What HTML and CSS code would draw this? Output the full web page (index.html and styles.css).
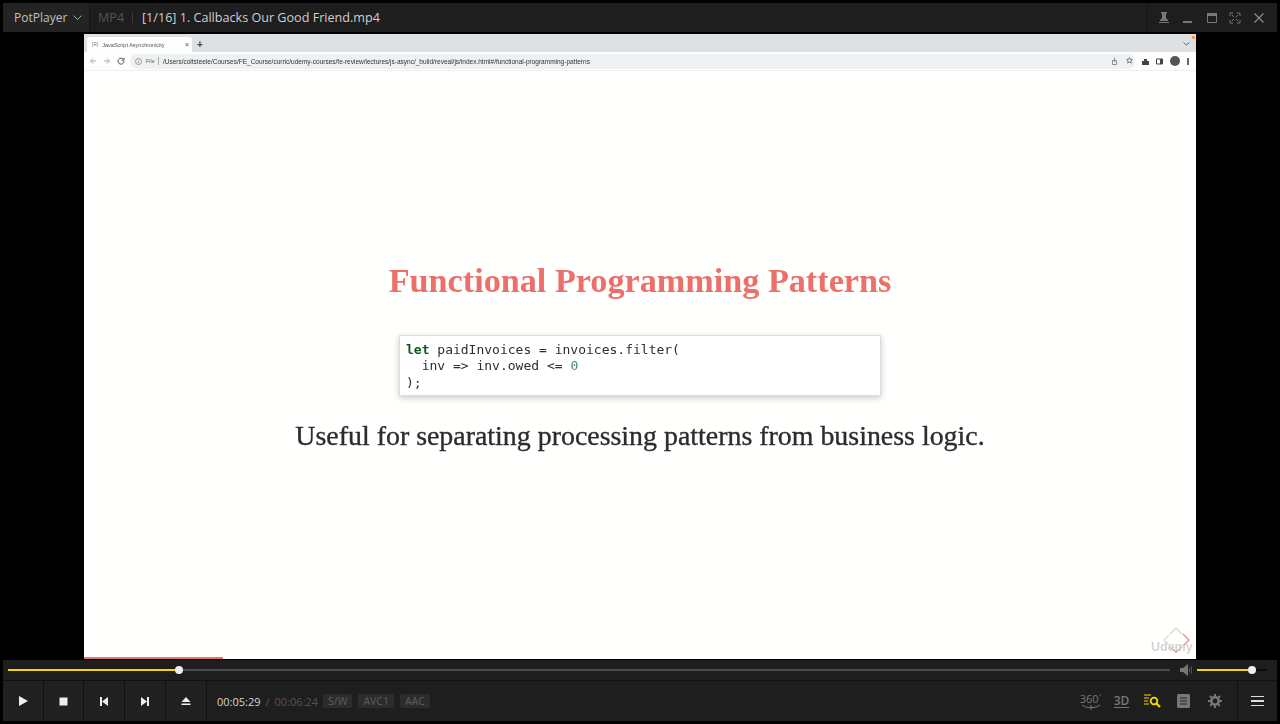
FILE: index.html
```html
<!DOCTYPE html>
<html lang="en">
<head>
    <meta charset="UTF-8">
    <meta name="viewport" content="width=device-width, initial-scale=1.0">
    <title>PotPlayer</title>
    <link rel="stylesheet" href="styles.css">
</head>
<body>

    <div class="player">
        <!-- title bar -->
        <div class="titlebar">
            <div class="brand">PotPlayer
                <svg class="chev" width="9" height="5" viewBox="0 0 9 5"><path d="M.5.5l4 4 4-4" fill="none" stroke="#aaa"/></svg>
            </div>
            <div class="title-main">
                <span class="format">MP4</span>
                <span class="title-sep"></span>
                <span class="filename">[1/16] 1. Callbacks Our Good Friend.mp4</span>
            </div>
            <div class="window-btns">
                <svg width="12" height="12" viewBox="0 0 12 12"><path d="M3 0h6v1L8 2v4l2 2v1H2V8l2-2V2L3 1zM1 10h10v1H1z" fill="#777"/></svg>
                <svg width="12" height="12" viewBox="0 0 12 12"><path d="M1 9h9v2H1z" fill="#777"/></svg>
                <svg width="12" height="12" viewBox="0 0 12 12"><path d="M1.500 1.500h9v9h-9z" fill="none" stroke="#777"/><path d="M1 1h10v3H1z" fill="#777"/></svg>
                <svg width="12" height="12" viewBox="0 0 12 12"><path d="M1 4V1h3M8 1h3v3M11 8v3H8M4 11H1V8M3 3l2 2M9 3L7 5M9 9L7 7M3 9l2-2" fill="none" stroke="#777"/></svg>
                <svg width="12" height="12" viewBox="0 0 12 12"><path d="M1.500 1.500l9 9M10.500 1.500l-9 9" fill="none" stroke="#888" stroke-width="1.300"/></svg>
            </div>
        </div>

        <!-- video picture -->
        <div class="stage">
            <div class="video">
                <div class="chrome">
                    <div class="tabstrip">
                        <div class="tab">
                            <span class="favicon">{R}</span>
                            <span class="tab-title">JavaScript Asynchronicity</span>
                            <span class="tab-close">×</span>
                        </div>
                        <span class="tab-new">+</span>
                        <svg class="tab-more" width="7" height="4" viewBox="0 0 7 4"><path d="M.5.5l3 2.500 3-2.500" fill="none" stroke="#666"/></svg>
                        <span class="rec-dot"></span>
                    </div>
                    <div class="toolbar">
                        <div class="nav">
                            <svg width="8" height="8" viewBox="0 0 8 8"><path d="M7 4H1.500M4 1.500L1.500 4 4 6.500" fill="none" stroke="#aaa"/></svg>
                            <svg width="8" height="8" viewBox="0 0 8 8"><path d="M1 4h5.500M4 1.500L6.500 4 4 6.500" fill="none" stroke="#aaa"/></svg>
                            <svg width="8" height="8" viewBox="0 0 8 8"><path d="M6.500 2.500A3 3 0 1 0 7 4M7 .8v2.400H4.600" fill="none" stroke="#555"/></svg>
                        </div>
                        <div class="omnibox">
                            <svg width="7" height="7" viewBox="0 0 7 7"><circle cx="3.500" cy="3.500" r="3" fill="none" stroke="#777" stroke-width=".7"/><path d="M3.500 3v2.200M3.500 1.800v.6" stroke="#777" stroke-width=".7"/></svg>
                            <span class="file-chip">File</span>
                            <span class="omni-sep"></span>
                            <span class="url">/Users/coltsteele/Courses/FE_Course/curric/udemy-courses/fe-review/lectures/js-async/_build/reveal/js/index.html#/functional-programming-patterns</span>
                            <div class="omni-icons">
                                <svg width="7" height="8" viewBox="0 0 7 8"><path d="M1.500 3.500h4v4h-4zM3.500 5V.5" fill="none" stroke="#777" stroke-width=".8"/></svg>
                                <svg width="7" height="7" viewBox="0 0 7 7"><path d="M3.500.5l.9 2h2l-1.600 1.400.6 2.200-1.900-1.200-1.900 1.200.6-2.200L.6 2.500h2z" fill="none" stroke="#666" stroke-width=".8"/></svg>
                            </div>
                        </div>
                        <div class="ext-icons">
                            <svg width="7" height="7" viewBox="0 0 7 7"><path d="M0 3h2V1h3v2h2v4H0z" fill="#444"/></svg>
                            <svg width="7" height="7" viewBox="0 0 7 7"><path d="M.5 1h6v5h-6z" fill="none" stroke="#444"/><path d="M4 1h3v5H4z" fill="#444"/></svg>
                            <span class="avatar"></span>
                            <span class="kebab"></span>
                        </div>
                    </div>
                </div>

                <div class="slide">
                    <h1>Functional Programming Patterns</h1>
                    <div class="code">
                        <div class="line"><span class="kw">let</span> paidInvoices = invoices.filter(</div>
                        <div class="line">  inv =&gt; inv.owed &lt;= <span class="num">0</span></div>
                        <div class="line">);</div>
                    </div>
                    <p>Useful for separating processing patterns from business logic.</p>
                    <div class="watermark">
                        <svg width="28" height="28" viewBox="0 0 28 28"><path d="M8 8l6-6 6 6" fill="none" stroke="#e4d6d4" stroke-width="1.500"/><path d="M21 8l6 6-6 6" fill="none" stroke="#e29a94" stroke-width="1.500"/><path d="M8 21l6 5 6-5" fill="none" stroke="#e29a94" stroke-width="1.500"/><path d="M7 9l-5 5 5 5" fill="none" stroke="#ecdcda" stroke-width="1.500"/></svg>
                        <span>Udemy</span>
                    </div>
                </div>
                <div class="course-progress"></div>
            </div>
        </div>

        <!-- seek bar -->
        <div class="seekrow">
            <div class="seek">
                <div class="seek-fill"></div>
                <span class="knob"></span>
            </div>
            <svg class="vol-icon" width="12" height="12" viewBox="0 0 12 12"><path d="M0 4h3l5-4v12L3 8H0z" fill="#777"/><path d="M9.500 3.500v5M11.500 2.500v7" stroke="#555"/></svg>
            <div class="volume">
                <div class="volume-fill"></div>
                <span class="knob"></span>
            </div>
        </div>

        <!-- controls -->
        <div class="controls">
            <div class="ctl"><svg width="12" height="12" viewBox="0 0 12 12"><path d="M2 1l9 5-9 5z" fill="#eee"/></svg></div>
            <div class="ctl"><svg width="9" height="9" viewBox="0 0 9 9"><path d="M.5.500h8v8h-8z" fill="#eee"/></svg></div>
            <div class="ctl"><svg width="10" height="9" viewBox="0 0 10 9"><path d="M1 0h2v9H1zM9 0v9L3 4.500z" fill="#eee"/></svg></div>
            <div class="ctl"><svg width="10" height="9" viewBox="0 0 10 9"><path d="M7 0h2v9H7zM1 0v9l6-4.500z" fill="#eee"/></svg></div>
            <div class="ctl"><svg width="10" height="9" viewBox="0 0 10 9"><path d="M5 0l4.500 5h-9zM.5 6.500h9V8h-9z" fill="#eee"/></svg></div>
            <div class="time">
                <span class="time-now">00:05:29</span>
                <span class="time-sep">/</span>
                <span class="time-total">00:06:24</span>
                <span class="badge">S/W</span>
                <span class="badge">AVC1</span>
                <span class="badge">AAC</span>
            </div>
            <div class="tools">
                <div class="tool tool-360">
                    <span>360<sup>°</sup></span>
                    <svg width="20" height="6" viewBox="0 0 20 6"><path d="M1 1q3 2.500 7 2.500M19 1q-3 2.500-7 2.500M10 1v5M8 3.500h4" fill="none" stroke="#777"/></svg>
                </div>
                <div class="tool"><span class="tool-3d">3D</span></div>
                <div class="tool"><svg width="17" height="14" viewBox="0 0 17 14"><path d="M0 1h7M0 4h5M0 7h4M0 10h5" stroke="#f5d800" stroke-width="1.200"/><circle cx="10" cy="7" r="3.300" fill="none" stroke="#f5d800" stroke-width="1.800"/><path d="M12.500 9.500l3.500 3.500" stroke="#f5d800" stroke-width="2.200"/></svg></div>
                <div class="tool"><svg width="13" height="14" viewBox="0 0 13 14"><rect width="13" height="14" rx="1.500" fill="#777"/><path d="M3 4h7M3 7h7M3 10h7" stroke="#222"/></svg></div>
                <div class="tool"><svg width="14" height="14" viewBox="0 0 14 14"><circle cx="7" cy="7" r="3.700" fill="none" stroke="#777" stroke-width="2.600"/><path d="M7 0v14M0 7h14M2 2l10 10M12 2L2 12" stroke="#777" stroke-width="2" stroke-dasharray="2.500 9 2.500"/></svg></div>
            </div>
            <div class="menu-btn">
                <span></span><span></span><span></span>
            </div>
        </div>
    </div>

</body>
</html>
```

FILE: styles.css
```css
* { box-sizing: border-box; }
html, body {
    margin: 0;
    padding: 0;
    height: 100%;
    overflow: hidden;
    background: #000;
}
.player {
    height: 724px;
    padding: 3px 3px 3px;
    display: flex;
    flex-direction: column;
    font-family: "Open Sans", "Noto Sans", sans-serif;
}

/* title bar */
.titlebar {
    height: 29px;
    display: flex;
    align-items: stretch;
    background: #1e1e1e;
    flex: none;
}
.brand {
    width: 87px;
    display: flex;
    align-items: center;
    gap: 6px;
    padding-left: 11px;
    font-size: 12px;
    color: #c0c0c0;
    background: #232323;
    border-right: 1px solid #141414;
}
.title-main {
    flex: 1;
    display: flex;
    align-items: center;
    padding-left: 8px;
    font-size: 12.600px;
}
.format { color: #555; width: 34px; }
.title-sep { width: 1px; height: 10px; background: #3c3c3c; margin: 0 9px 0 0; }
.filename { color: #cfcfcf; }
.window-btns {
    width: 130px;
    display: flex;
    align-items: center;
    justify-content: space-between;
    padding: 0 12px 0 10px;
    border-left: 1px solid #141414;
}

/* video */
.stage {
    height: 625px;
    margin: 2px -3px 0;
    display: flex;
    justify-content: center;
    flex: none;
}
.video {
    width: 1112px;
    height: 625px;
    display: flex;
    flex-direction: column;
    background: #fffffd;
    position: relative;
}
.chrome { flex: none; filter: blur(.35px); border-bottom: 1px solid #eef0f0; }
.tabstrip {
    height: 18px;
    background: #dee1e3;
    display: flex;
    align-items: flex-end;
    padding-left: 3px;
    position: relative;
}
.tab {
    width: 105px;
    height: 15px;
    background: #fdfdfd;
    border-radius: 3px 3px 0 0;
    display: flex;
    align-items: center;
    padding: 0 3px 0 5px;
    gap: 4px;
    font-family: "Liberation Sans", sans-serif;
    font-size: 5.500px;
    color: #555;
}
.favicon { font-size: 4.500px; color: #777; }
.tab-title { flex: 1; }
.tab-close { font-size: 7px; color: #444; }
.tab-new { font-size: 10px; line-height: 15px; color: #444; font-family: "Liberation Sans", sans-serif; margin-left: 5px; font-weight: bold; }
.tab-more { margin-left: auto; margin-right: 6px; margin-bottom: 6px; }
.rec-dot {
    position: absolute;
    right: 1px;
    top: 2px;
    width: 3px;
    height: 3px;
    background: #f2a04a;
}
.toolbar {
    height: 18px;
    background: #fdfdfd;
    display: flex;
    align-items: center;
    padding: 0 5px;
}
.nav { display: flex; gap: 6px; margin-right: 5px; }
.omnibox {
    flex: 1;
    height: 15px;
    background: #eef1f2;
    border-radius: 8px;
    display: flex;
    align-items: center;
    padding: 0 2px 0 5px;
    font-family: "Liberation Sans", sans-serif;
    font-size: 5.500px;
    color: #333;
}
.file-chip { margin-left: 4px; color: #666; }
.omni-sep { width: 1px; height: 8px; background: #aaa; margin: 0 4px 0 3px; }
.url { white-space: nowrap; font-size: 6.500px; }
.omni-icons { margin-left: auto; display: flex; gap: 8px; }
.ext-icons { display: flex; align-items: center; gap: 7px; margin-left: 7px; padding-right: 2px; }
.avatar { width: 10px; height: 10px; border-radius: 50%; background: #555; }
.kebab { width: 2px; height: 7px; background: radial-gradient(circle, #666 1px, transparent 1px) 0 0 / 2px 2.500px; }

.slide {
    flex: 1;
    display: flex;
    flex-direction: column;
    align-items: center;
    padding-top: 191px;
    position: relative;
    filter: blur(.4px);
}
h1 {
    margin: 0;
    font-family: "Liberation Serif", serif;
    font-size: 34.200px;
    line-height: 38px;
    font-weight: bold;
    color: #ec6f6a;
    white-space: nowrap;
}
.code {
    width: 482px;
    height: 61px;
    margin: 35px 0 0;
    padding: 6px 6px;
    background: #fff;
    border: 1px solid #dedede;
    box-shadow: 0 2px 6px rgba(0, 0, 0, .22);
    font-family: "DejaVu Sans Mono", monospace;
    font-size: 13px;
    line-height: 16.400px;
    color: #2e2e2e;
}
.line { white-space: pre; height: 16.400px; }
.kw { color: #0b5a1f; font-weight: bold; }
.num { color: #3f8f78; }
.slide p {
    margin: 22px 0 0;
    font-family: "Liberation Serif", serif;
    font-size: 27.900px;
    line-height: 36px;
    color: #2c2c2c;
    -webkit-text-stroke: .35px #2c2c2c;
    white-space: nowrap;
}
.watermark {
    position: absolute;
    right: 6px;
    bottom: 3px;
    width: 39px;
    height: 30px;
}
.watermark svg { position: absolute; right: 0; top: 0; }
.watermark span {
    position: absolute;
    left: 0;
    bottom: 2px;
    font-family: "Liberation Sans", sans-serif;
    font-weight: bold;
    font-size: 12.500px;
    color: #d4d4d4;
    filter: blur(.7px);
}
.course-progress {
    position: absolute;
    left: 0;
    bottom: 0;
    width: 139px;
    height: 2px;
    background: #e8736f;
}

/* seek bar */
.seekrow {
    height: 21px;
    margin-top: 1px;
    flex: none;
    background: #1e1e1e;
    border-bottom: 1px solid #111;
    display: flex;
    align-items: center;
    padding: 0 10px 0 5px;
}
.seek {
    width: 1162px;
    height: 2px;
    background: #4a4a4a;
    position: relative;
    flex: none;
}
.seek-fill { width: 171px; height: 2px; background: #f5d800; }
.knob {
    position: absolute;
    top: -3px;
    width: 8px;
    height: 8px;
    border-radius: 50%;
    background: #eee;
}
.seek .knob { left: 167px; }
.vol-icon { margin-left: 10px; flex: none; }
.volume {
    width: 70px;
    height: 2px;
    margin-left: 5px;
    background: #0c0c0c;
    position: relative;
    flex: none;
}
.volume-fill { width: 55px; height: 2px; background: #f5d800; }
.volume .knob { left: 51px; }

/* controls */
.controls {
    flex: 1;
    display: flex;
    align-items: stretch;
    background: #1e1e1e;
}
.ctl {
    width: 41px;
    display: flex;
    align-items: center;
    justify-content: center;
    background: #212121;
    border-right: 1px solid #111;
}
.ctl:nth-child(2) { width: 40px; }
.time {
    display: flex;
    align-items: center;
    padding-left: 10px;
    font-family: "Open Sans", sans-serif;
    font-size: 11px;
}
.time-now { color: #d6d6d6; }
.time-sep { color: #5a5a5a; margin: 0 5px; }
.time-total { color: #555; }
.badge {
    margin-left: 6px;
    padding: 0 5px;
    height: 14px;
    font-size: 10.500px;
    line-height: 14px;
    border-radius: 2px;
    background: #2c2c2c;
    color: #5d5d5d;
}
.time-total + .badge { margin-left: 5px; }
.tools {
    margin-left: auto;
    display: flex;
    align-items: center;
    margin-right: 7px;
}
.tool {
    width: 31px;
    display: flex;
    flex-direction: column;
    align-items: center;
}
.tool-360 {
    font-size: 11px;
    line-height: 11px;
    color: #777;
    white-space: nowrap;
}
.tool-360 sup { font-size: 6px; line-height: 0; }
.tool-3d {
    font-size: 12px;
    font-weight: 600;
    line-height: 13px;
    color: #777;
    border-bottom: 1px solid #777;
}
.menu-btn {
    width: 40px;
    display: flex;
    flex-direction: column;
    align-items: center;
    justify-content: center;
    gap: 3px;
    border-left: 1px solid #111;
}
.menu-btn span { width: 13px; height: 1.500px; background: #ddd; }
```
